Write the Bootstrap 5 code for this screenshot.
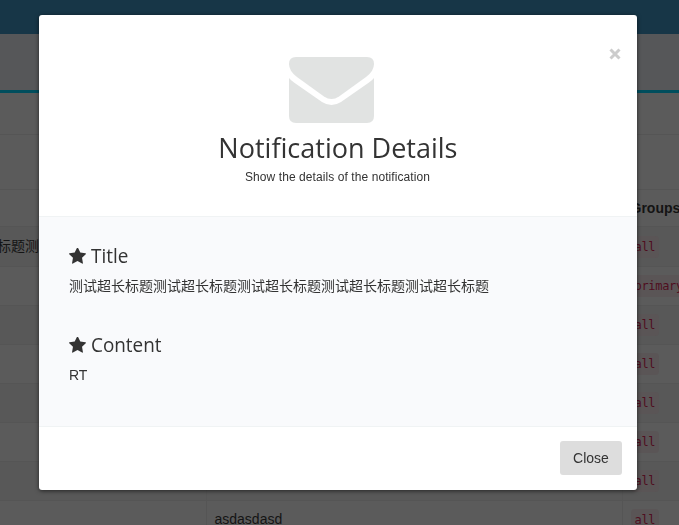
<!DOCTYPE html>
<html lang="en">
<head>
<meta charset="utf-8">
<title>Notification Details</title>
<link href="https://cdn.jsdelivr.net/npm/bootstrap@5.3.0/dist/css/bootstrap.min.css" rel="stylesheet">
<style>
body{font-family:"Liberation Sans","Noto Sans CJK SC",sans-serif;font-size:14px;line-height:20px;color:#333;background:#5b5b5b;height:525px;overflow:hidden}
.top-bar{height:34px;background:#173647}
.page-head{height:59px;background:#565759;border-bottom:3px solid #004e5d}
.toolbar-a{height:42px;border-bottom:1px solid #555}
.toolbar-b{height:54px}
.back-table{color:#141414;width:100%;table-layout:fixed;border-collapse:collapse}
.back-table th,.back-table td{border:1px solid #555;padding:0 8px;height:39px;line-height:20px;white-space:nowrap}
.back-table tr>:first-child{border-left:0}
.back-table tr>:last-child{border-right:0;padding-right:0}
.back-table th{height:37px}
.back-table tr.first-item td{height:40px}
.back-table td span{position:relative;top:-1px}
.back-table .cut-title{left:-3px}
.back-table tbody tr:nth-child(odd){background:#585858}
.back-table code{font:12px/18px "DejaVu Sans Mono",monospace;color:#4f0e20;background:#5a5556;padding:2px 4px;border-radius:4px;display:inline-block;letter-spacing:-.3px}
.back-table .c1{width:206px}.back-table .c2{width:416px}
.notice .modal-dialog{width:598px;max-width:none;margin:15px 0 0 39px}
.notice .modal-content{border:0;border-radius:3px;height:475px;box-shadow:0 1px 4px rgba(0,0,0,.6);color:#333}
.notice .modal-header{height:202px;border-bottom:1px solid #f0f3f4;padding:42px 15px 0}
.notice .modal-body{background:#f9fafc;padding:26px 30px 0}
.notice .modal-footer{height:64px;border-top:1px solid #f0f3f4;padding:0 15px 2px}
.notice .envelope{margin-right:13px}
.notice h4{font:400 28px/34px "Open Sans","Noto Sans",sans-serif;margin:7px 0 4px;white-space:nowrap}
.notice h5{font:400 20px/26px "Open Sans","Noto Sans",sans-serif;margin:0 0 7px}
.notice h5.section-gap{margin-top:36px}
.sub{font-size:12px;line-height:18px;letter-spacing:.08px;padding-right:1px}
.title-txt{display:inline-block;transform:scaleX(.965)}
.head-txt{display:inline-block;transform:scaleX(.945);transform-origin:left}
.star{margin-right:5px}
.dismiss{top:33px;right:16px;line-height:0}
.btn-shut{background:#ddd;color:#333;font-size:14px;line-height:20px;padding:7px 13px;border:0;border-radius:3px;width:62px}
</style>
<script src="https://cdn.jsdelivr.net/npm/bootstrap@5.3.0/dist/js/bootstrap.bundle.min.js"></script>
</head>
<body>
<svg class="d-none"><symbol id="star" viewBox="0 110 1664 1520"><path d="M1664 647q0 22-26 48l-363 354 86 500q1 7 1 20 0 21-10.500 35.500t-30.500 14.500q-19 0-40-12l-449-236-449 236q-22 12-40 12-21 0-31.500-14.500t-10.500-35.500q0-6 2-20l86-500-364-354q-25-27-25-48 0-37 56-46l502-73 225-455q19-41 49-41t49 41l225 455 502 73q56 9 56 46z"/></symbol></svg>
<div class="top-bar"></div>
<div class="page-head"></div>
<div class="toolbar-a"></div>
<div class="toolbar-b"></div>
<table class="back-table">
<colgroup><col class="c1"><col class="c2"><col></colgroup>
<thead><tr><th></th><th></th><th>Groups</th></tr></thead>
<tbody>
<tr class="first-item"><td class="p-0"><span class="cut-title">标题测</span></td><td></td><td><code>all</code></td></tr>
<tr><td></td><td></td><td><code>primary</code></td></tr>
<tr><td></td><td></td><td><code>all</code></td></tr>
<tr><td></td><td></td><td><code>all</code></td></tr>
<tr><td></td><td></td><td><code>all</code></td></tr>
<tr><td></td><td></td><td><code>all</code></td></tr>
<tr><td></td><td></td><td><code>all</code></td></tr>
<tr><td></td><td><span>asdasdasd</span></td><td><code>all</code></td></tr>
</tbody>
</table>

<div class="modal notice d-block" tabindex="-1">
<div class="modal-dialog">
<div class="modal-content">
<div class="modal-header d-flex flex-column align-items-center justify-content-start text-center">
<svg class="envelope" width="85" height="66" viewBox="0 0 85 66" fill="#e1e3e2"><path d="M7 0H78Q85 0 85 7Q85 14 77 20L50 39.500Q42.500 44.500 35 39.500L8 20Q0 14 0 7Q0 0 7 0Z"/><path d="M0 21Q1.500 23 5 25.500L33 45Q42.500 51 52 45L80 25.500Q83.500 23 85 21V59Q85 66 78 66H7Q0 66 0 59Z"/></svg>
<h4><span class="title-txt">Notification Details</span></h4>
<div class="sub">Show the details of the notification</div>
<button type="button" class="btn p-0 border-0 position-absolute dismiss" aria-label="Close"><svg width="12" height="12" viewBox="0 0 12 12" stroke="#ccc" stroke-width="3"><path d="M1.500 1.500L10.500 10.500M10.500 1.500L1.500 10.500"/></svg></button>
</div>
<div class="modal-body">
<h5 class="d-flex align-items-center"><svg class="star" width="17" height="16" fill="#333"><use href="#star"/></svg><span class="head-txt">Title</span></h5>
<div class="text-nowrap">测试超长标题测试超长标题测试超长标题测试超长标题测试超长标题</div>
<h5 class="d-flex align-items-center section-gap"><svg class="star" width="17" height="16" fill="#333"><use href="#star"/></svg><span class="head-txt">Content</span></h5>
<div>RT</div>
</div>
<div class="modal-footer">
<button type="button" class="btn btn-shut m-0">Close</button>
</div>
</div>
</div>
</div>
</body>
</html>
